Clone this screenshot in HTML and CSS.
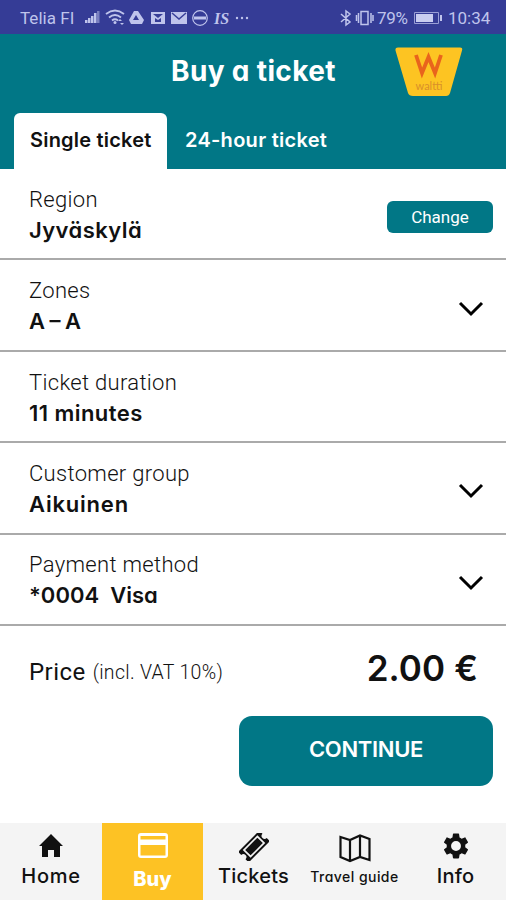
FILE: index.html
```html
<!DOCTYPE html>
<html lang="en">
<head>
<meta charset="utf-8">
<title>Buy a ticket</title>
<link rel="stylesheet" href="styles.css">
</head>
<body>
<div class="app">
  <div class="status">
    <span class="carrier">Telia FI</span>
    <svg class="status-icons" width="165" height="20" viewBox="0 0 165 20" fill="#bfc4ec">
      <path d="M1 15h2.500v-3H1zM4 15h2.500v-5H4zM7 15h2.500V8H7zM10 15h2.500V5H10z"/><path opacity=".5" d="M13 15h2.500V3H13z"/>
      <g fill="none" stroke="#bfc4ec" stroke-width="1.800"><path d="M22 6Q31-1 40 6M25 9.500Q31 4.500 37 9.500M28 12.500Q31 10 34 12.500"/></g><circle cx="31" cy="14.500" r="1.500"/><path d="m34 13 2-2 2 2zm2 2h4l-2 2z"/>
      <path d="M50 3h4l6 9-2 4H47l-2-4zM52 7l-3 5h6z" fill-rule="evenodd"/>
      <path fill-rule="evenodd" d="M67 4h14v12H67zM69 6v8h10V6z"/><path d="m69 6 5 4 5-4v8h-2v-4l-3 2-3-2v4h-2z"/>
      <path d="M87 4h16v12H87z"/><path d="m88 5 7 6 7-6" fill="none" stroke="#39409a" stroke-width="1.500"/>
      <circle cx="116" cy="10" r="7.300" fill="none" stroke="#bfc4ec" stroke-width="1.200"/><path d="M110 8.500h12v3h-12z"/>
      <text x="130" y="16" class="is">IS</text>
      <circle cx="153" cy="10" r="1.200"/><circle cx="158" cy="10" r="1.200"/><circle cx="163" cy="10" r="1.200"/>
    </svg>
    <svg class="status-right" width="37" height="20" viewBox="0 0 37 20" fill="none" stroke="#bfc4ec" stroke-width="1.500"><path d="m1 6 9 8-4 3V3l4 3-9 8M21 3.500h7v13h-7zM18.500 5v10M31 5v10M16.500 7v6M33 7v6"/></svg>
    <span class="percent">79%</span>
    <svg class="battery" width="30" height="20" viewBox="0 0 30 20"><path d="M1.500 4.500h24v11h-24z" fill="none" stroke="#9a9fd6"/><path d="M3 6h17v8H3z" fill="#c9cdf0"/><path d="M27 7h2v6h-2z" fill="#bfc4ec"/></svg>
    <span class="clock">10:34</span>
  </div>
  <header class="header">
    <h1 class="title">Buy a ticket</h1>
    <svg class="logo" width="68" height="50" viewBox="0 0 68 50">
      <path d="M3 .5h62q3 0 2 3L55 46q-1 3-4 3H18q-4 0-5-3L.5 3.500Q0 .5 3 .5z" fill="#fdc422"/>
      <path d="m21 8 6 18 6.500-16 6.500 16 6-18" fill="none" stroke="#e9641c" stroke-width="3.800"/>
      <text x="34" y="43" text-anchor="middle" class="brand">waltti</text>
    </svg>
  </header>
  <nav class="tabs">
    <div class="tab active"><span class="t-single">Single ticket</span></div>
    <div class="tab"><span class="t-day">24-hour ticket</span></div>
  </nav>
  <main>
    <section class="row">
      <div class="field"><div class="label">Region</div><div class="value">Jyväskylä</div></div>
      <button class="change">Change</button>
    </section>
    <section class="row">
      <div class="field"><div class="label">Zones</div><div class="value v-zone">A – A</div></div>
      <svg class="chevron" width="26" height="16" viewBox="0 0 26 16"><path d="m2 2 11 11L24 2"/></svg>
    </section>
    <section class="row">
      <div class="field"><div class="label">Ticket duration</div><div class="value">11 minutes</div></div>
    </section>
    <section class="row">
      <div class="field"><div class="label">Customer group</div><div class="value v-group">Aikuinen</div></div>
      <svg class="chevron" width="26" height="16" viewBox="0 0 26 16"><path d="m2 2 11 11L24 2"/></svg>
    </section>
    <section class="row">
      <div class="field"><div class="label">Payment method</div><div class="value v-pay">*0004&nbsp; Visa</div></div>
      <svg class="chevron" width="26" height="16" viewBox="0 0 26 16"><path d="m2 2 11 11L24 2"/></svg>
    </section>
    <section class="price">
      <span class="price-label">Price</span><span class="vat">(incl. VAT 10%)</span><span class="amount">2.00 €</span>
    </section>
    <button class="continue">CONTINUE</button>
  </main>
  <nav class="bottom">
    <div class="item"><svg width="26" height="26" viewBox="0 0 26 26"><path d="M13 1 1 13h3v11h6v-7h6v7h6V13h3z"/></svg><span class="n-home">Home</span></div>
    <div class="item selected"><svg width="32" height="26" viewBox="0 0 32 26"><path fill-rule="evenodd" fill="#fff" d="M4 0h24q3 0 3 3v19q0 3-3 3H4q-3 0-3-3V3q0-3 3-3zm-.5 3v3.500h25V3zm0 9v10.500h25V12z"/></svg><span class="n-buy">Buy</span></div>
    <div class="item"><svg width="30" height="28" viewBox="0 0 30 28"><g transform="translate(15 13.500) rotate(-45)"><path d="M-15-7.500h30v4.500a3 3 0 0 0 0 6v4.500h-30V3a3 3 0 0 0 0-6z"/><path d="M-9.500-4.700h19v9.400h-19z" fill="none" stroke="#f4f4f4" stroke-width="1.700"/></g></svg><span class="n-tickets">Tickets</span></div>
    <div class="item"><svg width="32" height="30" viewBox="0 0 32 30"><path d="m1.500 4 9.500 3 10-4.500 9.500 3.500v21L21 24l-10 4-9.500-4zM11 7v21M21 2.500V24" fill="none" stroke="#111" stroke-width="2.200"/></svg><span class="n-guide">Travel guide</span></div>
    <div class="item"><svg width="26" height="26" viewBox="1.500 1.500 21 21"><path d="M19.430 12.980c.04-.32.07-.64.07-.98s-.03-.66-.07-.98l2.110-1.650c.19-.15.24-.42.12-.64l-2-3.460c-.12-.22-.39-.3-.61-.22l-2.490 1c-.52-.4-1.080-.73-1.690-.98l-.38-2.650C14.460 2.180 14.250 2 14 2h-4c-.25 0-.46.18-.49.42l-.38 2.650c-.61.25-1.170.59-1.690.98l-2.490-1c-.23-.09-.49 0-.61.22l-2 3.460c-.13.22-.07.49.12.64l2.110 1.650c-.04.32-.07.65-.07.98s.03.66.07.98l-2.110 1.650c-.19.15-.24.42-.12.64l2 3.460c.12.22.39.3.61.22l2.490-1c.52.4 1.080.73 1.690.98l.38 2.650c.03.24.24.42.49.42h4c.25 0 .46-.18.49-.42l.38-2.650c.61-.25 1.170-.59 1.690-.98l2.490 1c.23.09.49 0 .61-.22l2-3.460c.12-.22.07-.49-.12-.64zM12 16a4 4 0 1 1 0-8 4 4 0 0 1 0 8z"/></svg><span class="n-info">Info</span></div>
  </nav>
</div>
</body>
</html>
```
FILE: styles.css
```css
* { box-sizing: border-box; }
body { margin: 0; background: #fff; color: #111; font-family: Inter, "Open Sans", sans-serif; font-feature-settings: "cv11"; }
button { border: 0; padding: 0; font: inherit; color: #fff; background: #017786; }
svg { display: block; flex: none; }
.app { width: 506px; height: 900px; display: flex; flex-direction: column; overflow: hidden; }
span { white-space: nowrap; }

.status { height: 34px; flex: none; display: flex; align-items: center; padding: 2px 0 0 20px; background: #353c96; color: #bfc4ec; font: 17px/30px Roboto, sans-serif; }
.carrier { width: 64px; letter-spacing: .05px; }
.is { font: italic bold 16px "Liberation Serif", serif; }
.status-right { margin-left: 91px; }
.percent { width: 34px; letter-spacing: -.3px; }
.battery { margin-left: 2px; }
.clock { margin-left: 5px; }

.header { height: 79px; flex: none; display: flex; align-items: flex-start; background: #017786; padding: 13px 0 0 171px; }
.title { width: 224px; margin: 1px 0 0; font-size: 28px; line-height: 47px; font-weight: 700; letter-spacing: .35px; color: #fff; }
.brand { font: 11px Lato, sans-serif; fill: #d9902a; }

.tabs { height: 56px; flex: none; display: flex; background: #017786; padding-left: 14px; color: #fff; font-size: 20px; line-height: 55px; font-weight: 600; }
.tab { padding-left: 19px; }
.tab.active { width: 153px; padding-left: 16px; background: #fff; color: #111; border-radius: 6px 6px 0 0; }
.t-single { letter-spacing: .2px; }
.t-day { letter-spacing: .28px; margin-left: -1px; }

.row { height: 91.4px; display: flex; justify-content: space-between; padding: 14.8px 13px 0 29px; border-bottom: 2px solid #aaa; }
.label { font: 300 22px/31px Roboto, sans-serif; letter-spacing: .32px; color: #111; }
.value { font-size: 22px; line-height: 31px; font-weight: 600; letter-spacing: .45px; }
.v-zone { letter-spacing: 0; word-spacing: -1px; }
.v-group { letter-spacing: .8px; }
.v-pay { letter-spacing: 0; }
.change { width: 106px; height: 32px; margin-top: 17px; border-radius: 6px; font: 17px Roboto, sans-serif; }
.chevron { margin: 25.500px 9px 0 0; }
.chevron path { fill: none; stroke: #000; stroke-width: 3; }

.price { height: 90px; display: flex; align-items: center; padding: 3px 28px 0 29px; }
.price-label { font: 24px Roboto, sans-serif; letter-spacing: .45px; }
.vat { font: 300 19.500px Roboto, sans-serif; letter-spacing: .3px; margin-left: 7px; }
.amount { margin-left: auto; margin-top: -9px; font-size: 35px; font-weight: 600; letter-spacing: .1px; }
.continue { display: block; width: 254px; height: 70px; margin: 0 13px 0 239px; border-radius: 13px; font-size: 22px; font-weight: 600; letter-spacing: -.3px; padding-bottom: 3px; }

.bottom { height: 77px; flex: none; margin-top: auto; display: grid; grid-template-columns: 102px 101px 101px 101px 101px; background: #f4f4f4; }
.item { display: flex; flex-direction: column; align-items: center; padding-top: 10px; font-size: 20px; line-height: 26px; font-weight: 500; }
.item svg { fill: #111; }
.item span { margin-top: 4px; }
.n-home { letter-spacing: .7px; }
.selected { background: #fdc224; color: #fff; font-weight: 800; }
.item .n-buy { margin-top: 7px; }
.item .n-tickets { margin-top: 2px; letter-spacing: .2px; }
.item .n-guide { font-size: 14px; margin-top: 1px; letter-spacing: .45px; }
.n-info { letter-spacing: .2px; }
```
